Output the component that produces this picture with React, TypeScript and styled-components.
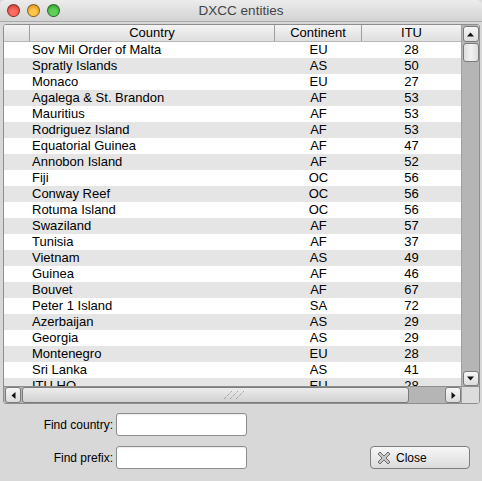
import React from "react";
import styled, { createGlobalStyle } from "styled-components";

const Global = createGlobalStyle`
  html, body { margin: 0; padding: 0; background: #d8d8d8; }
  body { font-family: "Liberation Sans", Arial, sans-serif; }
`;

const rows: [string, string, string][] = [
  ["Sov Mil Order of Malta", "EU", "28"],
  ["Spratly Islands", "AS", "50"],
  ["Monaco", "EU", "27"],
  ["Agalega & St. Brandon", "AF", "53"],
  ["Mauritius", "AF", "53"],
  ["Rodriguez Island", "AF", "53"],
  ["Equatorial Guinea", "AF", "47"],
  ["Annobon Island", "AF", "52"],
  ["Fiji", "OC", "56"],
  ["Conway Reef", "OC", "56"],
  ["Rotuma Island", "OC", "56"],
  ["Swaziland", "AF", "57"],
  ["Tunisia", "AF", "37"],
  ["Vietnam", "AS", "49"],
  ["Guinea", "AF", "46"],
  ["Bouvet", "AF", "67"],
  ["Peter 1 Island", "SA", "72"],
  ["Azerbaijan", "AS", "29"],
  ["Georgia", "AS", "29"],
  ["Montenegro", "EU", "28"],
  ["Sri Lanka", "AS", "41"],
  ["ITU HQ", "EU", "28"],
];

const Window = styled.div`
  width: 482px;
  height: 481px;
  background: #d8d8d8;
  display: flex;
  flex-direction: column;
  overflow: hidden;
  border-radius: 5px 5px 0 0;
`;

const TitleBar = styled.div`
  height: 21px;
  flex: none;
  background: linear-gradient(#ececec, #d3d3d3);
  border-bottom: 1px solid #a9a9a9;
  display: flex;
  align-items: center;
  padding-left: 7px;
  gap: 7px;
  position: relative;
`;

const Light = styled.div<{ $c: string; $d: string }>`
  width: 13px;
  height: 13px;
  border-radius: 50%;
  background: radial-gradient(circle at 50% 70%, ${(p) => p.$c} 30%, ${(p) => p.$d} 100%);
  border: 0.5px solid rgba(0, 0, 0, 0.45);
  box-sizing: border-box;
`;

const Title = styled.div`
  position: absolute;
  left: 0;
  right: 0;
  top: 0;
  height: 21px;
  line-height: 21px;
  text-align: center;
  font-size: 13.5px;
  color: #444;
  pointer-events: none;
`;

const Frame = styled.div`
  margin: 2px 2px 0 3px;
  height: 378px;
  border: 1px solid #8e8e8e;
  border-radius: 3px;
  background: #fff;
  display: grid;
  grid-template-columns: 1fr 18px;
  grid-template-rows: 1fr 17px;
  overflow: hidden;
`;

const Viewport = styled.div`
  overflow: hidden;
  font-size: 13px;
  color: #000;
`;

const cols = "26px 245px 87px 99px";

const Header = styled.div`
  display: grid;
  grid-template-columns: ${cols};
  height: 16px;
  background: linear-gradient(#f4f4f4, #dedede);
  border-bottom: 1px solid #b9b9b9;
`;

const HeadCell = styled.div`
  border-right: 1px solid #9e9e9e;
  text-align: center;
  line-height: 16px;
  &:last-child { border-right: none; }
`;

const Row = styled.div<{ $alt: boolean }>`
  display: grid;
  grid-template-columns: ${cols};
  height: 16px;
  line-height: 16px;
  background: ${(p) => (p.$alt ? "#e5e5e5" : "#fff")};
`;

const Cell = styled.div<{ $left?: boolean }>`
  text-align: ${(p) => (p.$left ? "left" : "center")};
  padding-left: ${(p) => (p.$left ? "2px" : "0")};
  white-space: nowrap;
`;

const VScroll = styled.div`
  background: #b5b5b5;
  border-left: 1px solid #a0a0a0;
  display: flex;
  flex-direction: column;
  align-items: center;
  padding-top: 1px;
  gap: 1px;
`;

const ArrowBtn = styled.div<{ $w: number; $h: number }>`
  width: ${(p) => p.$w}px;
  height: ${(p) => p.$h}px;
  flex: none;
  box-sizing: border-box;
  border: 1px solid #7b7b7b;
  border-radius: 3px;
  background: linear-gradient(#f6f6f6, #dcdcdc);
  display: flex;
  align-items: center;
  justify-content: center;
`;

const Thumb = styled.div<{ $w: number; $h: number }>`
  width: ${(p) => p.$w}px;
  height: ${(p) => p.$h}px;
  flex: none;
  box-sizing: border-box;
  border: 1px solid #7b7b7b;
  border-radius: 3px;
  background: linear-gradient(to right, #dedede, #f2f2f2 50%, #dedede);
`;

const Spacer = styled.div`
  flex: 1;
`;

const HScroll = styled.div`
  background: #b5b5b5;
  border-top: 1px solid #8e8e8e;
  display: flex;
  align-items: center;
  padding-left: 1px;
  gap: 1px;
`;

const HThumb = styled.div`
  width: 387px;
  height: 16px;
  box-sizing: border-box;
  border: 1px solid #7b7b7b;
  border-radius: 3px;
  background: linear-gradient(#ececec, #d2d2d2);
  display: flex;
  align-items: center;
  justify-content: center;
  padding-left: 36px;
`;

const Corner = styled.div`
  background: #dcdcdc;
  border-top: 1px solid #8e8e8e;
  border-left: 1px solid #a0a0a0;
`;

const Bottom = styled.div`
  display: grid;
  grid-template-columns: 116px 131px 1fr;
  grid-template-rows: 23px 23px;
  row-gap: 10px;
  padding: 9px 12px 0 0;
  align-items: center;
`;

const Label = styled.label`
  font-size: 12px;
  color: #000;
  text-align: right;
  padding-right: 3px;
`;

const Input = styled.div`
  height: 23px;
  box-sizing: border-box;
  border: 1px solid #8e8e8e;
  border-radius: 3px;
  background: #fff;
  box-shadow: inset 0 1px 1px rgba(0, 0, 0, 0.08);
`;

const ButtonCell = styled.div`
  display: flex;
  justify-content: flex-end;
`;

const Button = styled.button`
  width: 100px;
  height: 23px;
  box-sizing: border-box;
  border: 1px solid #7e7e7e;
  border-radius: 4px;
  background: linear-gradient(#f6f6f6, #dcdcdc);
  font-family: "Liberation Sans", Arial, sans-serif;
  font-size: 12px;
  color: #000;
  display: flex;
  align-items: center;
  gap: 4px;
  padding: 0 0 0 5px;
  margin-right: 0;
`;

const Up = () => (
  <svg width="7" height="5" viewBox="0 0 7 5"><path d="M0 4.5 L3.5 0.5 L7 4.5Z" fill="#111" /></svg>
);
const Down = () => (
  <svg width="7" height="5" viewBox="0 0 7 5"><path d="M0 0.5 L3.5 4.5 L7 0.5Z" fill="#111" /></svg>
);
const Left = () => (
  <svg width="5" height="7" viewBox="0 0 5 7"><path d="M4.5 0 L0.5 3.5 L4.5 7Z" fill="#111" /></svg>
);
const Right = () => (
  <svg width="5" height="7" viewBox="0 0 5 7"><path d="M0.5 0 L4.5 3.5 L0.5 7Z" fill="#111" /></svg>
);

const Grip = () => (
  <svg width="22" height="10" viewBox="0 0 22 10">
    {[0, 6, 12].map((x) => (
      <line key={x} x1={x + 1} y1={9} x2={x + 9} y2={1} stroke="#888" strokeWidth="1" strokeDasharray="1 1" />
    ))}
  </svg>
);

const CloseIcon = () => (
  <svg width="16" height="16" viewBox="0 0 16 16">
    <path
      d="M2 4 L4 2 L8 6 L12 2 L14 4 L10 8 L14 12 L12 14 L8 10 L4 14 L2 12 L6 8 Z"
      fill="#c4c4c4"
      stroke="#6d6d6d"
      strokeWidth="1"
      strokeLinejoin="round"
    />
  </svg>
);

export default function App() {
  return (
    <>
      <Global />
      <Window>
        <TitleBar>
          <Light $c="#ff6b5f" $d="#c5362c" />
          <Light $c="#ffc54a" $d="#d08a12" />
          <Light $c="#5fd25a" $d="#2e9a28" />
          <Title>DXCC entities</Title>
        </TitleBar>
        <Frame>
          <Viewport>
            <Header>
              <HeadCell />
              <HeadCell>Country</HeadCell>
              <HeadCell>Continent</HeadCell>
              <HeadCell>ITU</HeadCell>
            </Header>
            {rows.map((r, i) => (
              <Row key={i} $alt={i % 2 === 1}>
                <Cell />
                <Cell $left>{r[0]}</Cell>
                <Cell>{r[1]}</Cell>
                <Cell>{r[2]}</Cell>
              </Row>
            ))}
          </Viewport>
          <VScroll>
            <ArrowBtn $w={16} $h={16}><Up /></ArrowBtn>
            <Thumb $w={16} $h={19} />
            <Spacer />
            <ArrowBtn $w={16} $h={15}><Down /></ArrowBtn>
          </VScroll>
          <HScroll>
            <ArrowBtn $w={16} $h={16}><Left /></ArrowBtn>
            <HThumb><Grip /></HThumb>
            <Spacer />
            <ArrowBtn $w={16} $h={16}><Right /></ArrowBtn>
          </HScroll>
          <Corner />
        </Frame>
        <Bottom>
          <Label>Find country:</Label>
          <Input />
          <div />
          <Label>Find prefix:</Label>
          <Input />
          <ButtonCell>
            <Button>
              <CloseIcon />
              Close
            </Button>
          </ButtonCell>
        </Bottom>
      </Window>
    </>
  );
}
